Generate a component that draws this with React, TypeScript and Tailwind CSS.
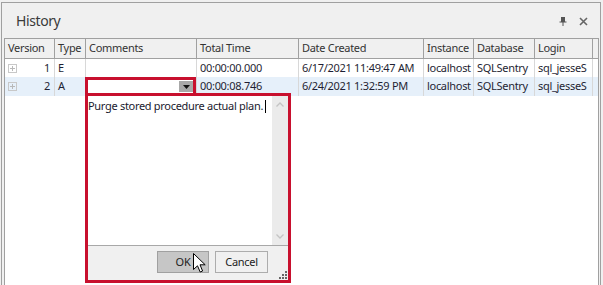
import React from "react";

const cols = [
  { name: "Version", w: "w-[50px]" },
  { name: "Type", w: "w-[31px]" },
  { name: "Comments", w: "w-[111px]" },
  { name: "Total Time", w: "w-[102px]" },
  { name: "Date Created", w: "w-[125px]" },
  { name: "Instance", w: "w-[50px]" },
  { name: "Database", w: "w-[61px]" },
  { name: "Login", w: "w-[58px]" },
];

const rows = [
  { v: "1", t: "E", c: "", tt: "00:00:00.000", d: "6/17/2021 11:49:47 AM", i: "localhost", db: "SQLSentry", l: "sql_jesseS", bg: "bg-white", h: "h-[18px]" },
  { v: "2", t: "A", c: "", tt: "00:00:08.746", d: "6/24/2021 1:32:59 PM", i: "localhost", db: "SQLSentry", l: "sql_jesseS", bg: "bg-[#e6f0fa]", h: "h-[19px]" },
];

function ExpandBox() {
  return (
    <svg width="9" height="9" viewBox="0 0 9 9" className="shrink-0">
      <rect x="0.5" y="0.5" width="8" height="8" fill="none" stroke="#c8c8c8" />
      <path d="M2 4.5H7M4.5 2V7" stroke="#b8b8b8" strokeWidth="1" />
    </svg>
  );
}

function Cursor() {
  return (
    <svg width="13" height="20" viewBox="0 0 13 20" className="absolute left-[193px] top-[253px]">
      <path
        d="M0.5 0.5V16.5L4.5 12.8L7.2 19L9.6 18L7 11.8H12.2Z"
        fill="#ffffff"
        stroke="#000000"
        strokeWidth="1"
        strokeLinejoin="miter"
      />
    </svg>
  );
}

export default function App() {
  return (
    <div
      className="relative w-[603px] h-[285px] overflow-hidden bg-[#f0f0f0] text-[11px] tracking-[-0.3px] text-[#1f1f33]"
      style={{ fontFamily: '"Noto Sans", "Liberation Sans", sans-serif' }}
    >
      <div className="ml-[1px] mt-[2px] w-[600px] h-[300px] border border-[#a0a0a0] bg-[#f0f0f0] flex flex-col">
        {/* title */}
        <div className="h-[35px] flex items-center pl-[14px] pr-[12px] shrink-0">
          <span className="text-[14px] tracking-[-0.4px] text-[#3a3a3a] leading-none mt-[1px]">History</span>
          <div className="ml-auto flex items-center gap-[12px] mt-[1px]">
            <svg width="8" height="9" viewBox="0 0 8 9">
              <path d="M2 0.5H6M2.5 0.5V5M5.5 0.5V5M0.5 5H7.5M4 5V9" stroke="#555" strokeWidth="1" fill="none" />
              <rect x="3" y="1" width="2" height="4" fill="#555" />
            </svg>
            <svg width="9" height="9" viewBox="0 0 9 9">
              <path d="M1 1L8 8M8 1L1 8" stroke="#666" strokeWidth="1.6" />
            </svg>
          </div>
        </div>
        {/* grid */}
        <div className="ml-[2px] w-[595px] flex-1 border border-[#a0a0a0] bg-white flex flex-col">
          <div className="flex h-[20px] bg-[#f0f0f0] border-b border-[#a0a0a0] text-[#333]">
            {cols.map((c) => (
              <div key={c.name} className={`${c.w} shrink-0 border-r border-[#a0a0a0] pl-[3px] flex items-center whitespace-nowrap overflow-hidden`}>
                {c.name}
              </div>
            ))}
          </div>
          {rows.map((r) => (
            <div key={r.v} className={`flex ${r.h} ${r.bg}`}>
              <div className="w-[50px] shrink-0 border-r border-[#d8d8d8] flex items-center pl-[3px] pr-[4px]">
                <ExpandBox />
                <span className="ml-auto">{r.v}</span>
              </div>
              <div className="w-[31px] shrink-0 border-r border-[#d8d8d8] flex items-center pl-[3px]">{r.t}</div>
              <div className="w-[111px] shrink-0 border-r border-[#d8d8d8] flex items-center pl-[3px]">{r.c}</div>
              <div className="w-[102px] shrink-0 border-r border-[#d8d8d8] flex items-center pl-[3px] whitespace-nowrap">{r.tt}</div>
              <div className="w-[125px] shrink-0 border-r border-[#d8d8d8] flex items-center pl-[3px] whitespace-nowrap">{r.d}</div>
              <div className="w-[50px] shrink-0 border-r border-[#d8d8d8] flex items-center pl-[3px] whitespace-nowrap overflow-hidden">{r.i}</div>
              <div className="w-[61px] shrink-0 border-r border-[#d8d8d8] flex items-center pl-[3px] whitespace-nowrap">{r.db}</div>
              <div className="w-[58px] shrink-0 border-r border-[#d8d8d8] flex items-center pl-[3px] whitespace-nowrap overflow-hidden">{r.l}</div>
            </div>
          ))}
        </div>
      </div>

      {/* in-cell editor */}
      <div className="absolute left-[85px] top-[77px] w-[111px] h-[19px] border-[3px] border-[#c8102e] bg-white flex justify-end items-stretch py-[1px]">
        <div className="w-[14px] bg-[#a8a8a8] flex items-center justify-center">
          <svg width="7" height="4" viewBox="0 0 7 4">
            <path d="M0 0H7L3.5 4Z" fill="#111" />
          </svg>
        </div>
      </div>

      {/* popup */}
      <div className="absolute left-[85px] top-[93px] w-[206px] h-[190px] border-[3px] border-[#c8102e] bg-[#f0f0f0] flex flex-col">
        <div className="h-[150px] bg-white flex border-b border-[#a8a8a8]">
          <div className="flex-1 pt-[3px] pl-[0px] leading-[14px] text-[#1a1a2e] whitespace-nowrap flex items-start">
            <span>Purge stored procedure actual plan.</span>
            <span className="inline-block w-px h-[13px] bg-black ml-[2px] mt-[1px]" />
          </div>
          <div className="w-[16px] bg-[#ebebeb] flex flex-col items-center justify-between pt-[6px] pb-[6px]">
            <svg width="8" height="5" viewBox="0 0 8 5">
              <path d="M0.5 4.5L4 1L7.5 4.5" stroke="#c4c4c4" strokeWidth="1.3" fill="none" />
            </svg>
            <svg width="8" height="5" viewBox="0 0 8 5">
              <path d="M0.5 0.5L4 4L7.5 0.5" stroke="#c4c4c4" strokeWidth="1.3" fill="none" />
            </svg>
          </div>
        </div>
        <div className="flex-1 relative flex justify-end items-start pt-[5px] pr-[20px] gap-[6px]">
          <div className="w-[52px] h-[22px] border border-[#a0a0a0] bg-[#c6c6c6] flex items-center justify-center text-[#222]">OK</div>
          <div className="w-[53px] h-[22px] border border-[#acacac] bg-[#f0f0f0] flex items-center justify-center text-[#222]">Cancel</div>
          <svg width="8" height="8" viewBox="0 0 8 8" className="absolute right-[1px] bottom-[1px]">
            <rect x="6" y="0" width="2" height="2" fill="#666" />
            <rect x="3" y="3" width="2" height="2" fill="#666" />
            <rect x="6" y="3" width="2" height="2" fill="#666" />
            <rect x="0" y="6" width="2" height="2" fill="#666" />
            <rect x="3" y="6" width="2" height="2" fill="#666" />
            <rect x="6" y="6" width="2" height="2" fill="#666" />
          </svg>
        </div>
      </div>

      <Cursor />
    </div>
  );
}
